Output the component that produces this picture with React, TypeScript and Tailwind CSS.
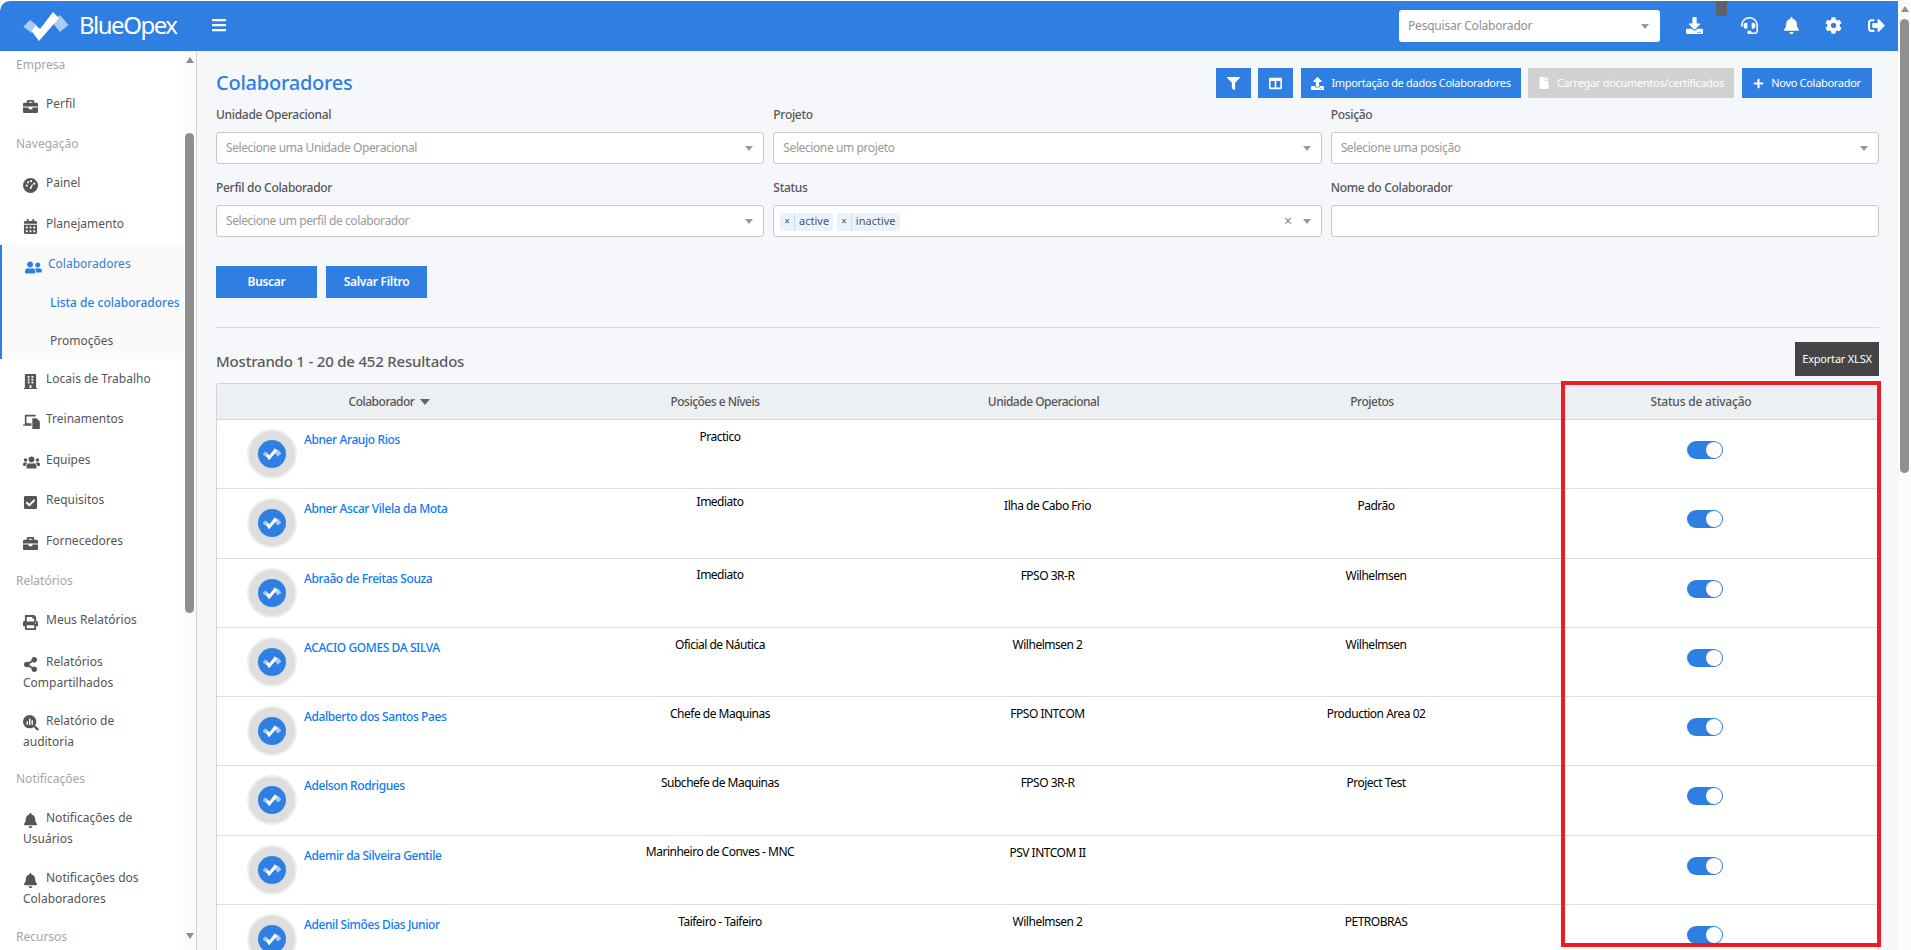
import {
  FaBars,
  FaBell,
  FaBriefcase,
  FaBuilding,
  FaCalendarAlt,
  FaCheckSquare,
  FaCog,
  FaColumns,
  FaDownload,
  FaFile,
  FaFilter,
  FaHeadset,
  FaPlus,
  FaPrint,
  FaShareAlt,
  FaSignOutAlt,
  FaUpload,
  FaUserFriends,
  FaUsers,
} from "react-icons/fa";
import type { ReactNode } from "react";

const blue = "bg-[#2f7fe3]";

const AuditIcon = () => (
  <svg viewBox="0 0 18 18" className="inline-block w-[16px] h-[16px] text-[#555]" fill="currentColor">
    <circle cx="7.5" cy="7.5" r="7.5" />
    <path d="M12 13.5l1.8-1.8 4.2 4.2-1.8 1.8z" />
    <rect x="4" y="7" width="1.6" height="4" fill="#fff" />
    <rect x="6.8" y="4" width="1.6" height="7" fill="#fff" />
    <rect x="9.6" y="6" width="1.6" height="5" fill="#fff" />
  </svg>
);

const TrainingIcon = () => (
  <svg viewBox="0 0 20 18" className="inline-block w-[17px] h-[15px] text-[#555]" fill="currentColor">
    <path d="M2 1h13v2H4v8h6v3H0v-1.5h2z" />
    <path d="M11 5h5l4 4v9h-9z" />
  </svg>
);

const DialIcon = () => (
  <svg viewBox="0 0 16 16" className="inline-block w-[15px] h-[15px] text-[#555]" fill="currentColor">
    <circle cx="8" cy="8" r="8" />
    <circle cx="4" cy="8" r="1.2" fill="#fff" />
    <circle cx="5.4" cy="4.6" r="1.2" fill="#fff" />
    <circle cx="8.6" cy="3.4" r="1.2" fill="#fff" />
    <circle cx="12" cy="6" r="1.2" fill="#fff" />
    <path d="M7 11l2.6-4.4 1 .5L8.6 12z" fill="#fff" />
  </svg>
);

type NavItem = {
  label: string;
  icon?: ReactNode;
  h: string;
  kind: "section" | "item" | "active" | "sub" | "subActive";
  cls?: string;
};

const iconCls = "inline-block text-[15px] text-[#555]";

const nav: NavItem[] = [
  { label: "Empresa", h: "h-[26px]", kind: "section" },
  { label: "Perfil", h: "h-[52px]", kind: "item", cls: "pt-[2px]", icon: <FaBriefcase className={iconCls} /> },
  { label: "Navegação", h: "h-[28px]", kind: "section" },
  { label: "Painel", h: "h-[48px]", kind: "item", cls: "pt-[4px]", icon: <DialIcon /> },
  { label: "Planejamento", h: "h-[40px]", kind: "item", cls: "pb-[2px]", icon: <FaCalendarAlt className={iconCls} /> },
  { label: "Colaboradores", h: "h-[36px]", kind: "active", cls: "pt-[4px]", icon: <FaUserFriends className="inline-block text-[17px] text-[#2f7fe3]" /> },
  { label: "Lista de colaboradores", h: "h-[41px]", kind: "subActive", cls: "pt-[2px]" },
  { label: "Promoções", h: "h-[37px]", kind: "sub" },
  { label: "Locais de Trabalho", h: "h-[39px]", kind: "item", cls: "pt-[2px]", icon: <FaBuilding className={iconCls} /> },
  { label: "Treinamentos", h: "h-[40px]", kind: "item", cls: "pt-[2px]", icon: <TrainingIcon /> },
  { label: "Equipes", h: "h-[41px]", kind: "item", cls: "pt-[4px]", icon: <FaUsers className="inline-block text-[17px] text-[#555]" /> },
  { label: "Requisitos", h: "h-[41px]", kind: "item", cls: "pt-[2px]", icon: <FaCheckSquare className={iconCls} /> },
  { label: "Fornecedores", h: "h-[40px]", kind: "item", cls: "pt-[2px]", icon: <FaBriefcase className={iconCls} /> },
  { label: "Relatórios", h: "h-[40px]", kind: "section" },
  { label: "Meus Relatórios", h: "h-[40px]", kind: "item", icon: <FaPrint className={iconCls} /> },
  { label: "Relatórios Compartilhados", h: "h-[60px]", kind: "item", cls: "pt-[3px]", icon: <FaShareAlt className={iconCls} /> },
  { label: "Relatório de auditoria", h: "h-[59px]", kind: "item", cls: "pt-[2px] pr-[40px]", icon: <AuditIcon /> },
  { label: "Notificações", h: "h-[38px]", kind: "section" },
  { label: "Notificações de Usuários", h: "h-[60px]", kind: "item", cls: "pt-[1px]", icon: <FaBell className={iconCls} /> },
  { label: "Notificações dos Colaboradores", h: "h-[61px]", kind: "item", cls: "pt-[1px]", icon: <FaBell className={iconCls} /> },
  { label: "Recursos", h: "h-[36px]", kind: "section" },
];

const rows = [
  { name: "Abner Araujo Rios", pos: "Practico", unit: "", proj: "", posCls: "pt-[8px]" },
  { name: "Abner Ascar Vilela da Mota", pos: "Imediato", unit: "Ilha de Cabo Frio", proj: "Padrão", posCls: "pt-[4px]" },
  { name: "Abraão de Freitas Souza", pos: "Imediato", unit: "FPSO 3R-R", proj: "Wilhelmsen", posCls: "pt-[7px]" },
  { name: "ACACIO GOMES DA SILVA", pos: "Oficial de Náutica", unit: "Wilhelmsen 2", proj: "Wilhelmsen", posCls: "pt-[8px]" },
  { name: "Adalberto dos Santos Paes", pos: "Chefe de Maquinas", unit: "FPSO INTCOM", proj: "Production Area 02", posCls: "pt-[8px]" },
  { name: "Adelson Rodrigues", pos: "Subchefe de Maquinas", unit: "FPSO 3R-R", proj: "Project Test", posCls: "pt-[8px]" },
  { name: "Ademir da Silveira Gentile", pos: "Marinheiro de Conves - MNC", unit: "PSV INTCOM II", proj: "", posCls: "pt-[7px]" },
  { name: "Adenil Simões Dias Junior", pos: "Taifeiro - Taifeiro", unit: "Wilhelmsen 2", proj: "PETROBRAS", posCls: "pt-[8px]" },
];

const Caret = ({ className = "border-t-[#999999]" }: { className?: string }) => (
  <span className={`inline-block w-0 h-0 border-x-[4px] border-x-transparent border-t-[5px] ${className}`} />
);

const LogoMark = ({ className }: { className: string }) => (
  <svg viewBox="0 0 48 32" className={className}>
    <path d="M1.3 16.7L8 10l6.7 5-5 8z" fill="#a9cbf5" />
    <path d="M38 5l8.5 10-8.5 7-8-10z" fill="#a9cbf5" />
    <path d="M9.5 21l4.5-5.5 4 3.5L31 2l6 6-20 23z" fill="#fff" />
  </svg>
);

const SidebarNav = () => (
  <div className="w-[197px] shrink-0 flex bg-white border-r border-[#d4d4d4] overflow-hidden rounded-bl-[10px]">
    <div className="w-[183px] shrink-0 overflow-hidden text-[12px] leading-[19px] text-[#555]">
      {nav.map((n) => {
        if (n.kind === "section")
          return (
            <div key={n.label} className={`${n.h} flex items-center pl-4 text-[12px] text-[#a5a5a5]`}>
              {n.label}
            </div>
          );
        if (n.kind === "sub" || n.kind === "subActive")
          return (
            <div
              key={n.label}
              className={`${n.h} ${n.cls ?? ""} flex items-center pl-[48px] bg-[#fafafa] border-l-2 border-[#2f7fe3] ${
                n.kind === "subActive" ? "text-[#2f7fe3] font-medium" : ""
              }`}
            >
              <span className="whitespace-nowrap">{n.label}</span>
            </div>
          );
        return (
          <div
            key={n.label}
            className={`${n.h} ${n.cls ?? ""} flex items-center pl-[23px] ${
              n.kind === "active" ? "bg-[#fafafa] border-l-2 border-[#2f7fe3] pl-[21px] text-[#2f7fe3]" : ""
            }`}
          >
            <div>
              <span className="inline-block w-[23px] align-[-2px]">{n.icon}</span>
              {n.label}
            </div>
          </div>
        );
      })}
    </div>
    <div className="relative flex-1 bg-[#fbfbfb] flex flex-col items-center">
      <Caret className="!border-t-0 border-b-[6px] border-b-[#8f8f8f] mt-[6px]" />
      <div className="w-[9px] h-[480px] mt-[70px] rounded-full bg-[#8f8f8f]" />
      <div className="absolute bottom-[5px] left-[3px]">
        <Caret className="border-t-[#8f8f8f] !border-t-[6px]" />
      </div>
    </div>
  </div>
);

const Field = ({ label, placeholder, children }: { label: string; placeholder?: string; children?: ReactNode }) => (
  <div>
    <div className="h-[18px] leading-[18px] text-[12px] font-medium tracking-[-0.3px] text-[#555] mb-[8px]">{label}</div>
    <div className="h-[32px] bg-white border border-[#c9c9c9] rounded-[3px] flex items-center pl-[9px] pr-[10px] text-[12px] tracking-[-0.4px] text-[#999]">
      <div className="flex-1 flex items-center min-w-0 -mt-px">{placeholder ?? children}</div>
      {label !== "Nome do Colaborador" && <Caret />}
    </div>
  </div>
);

const Chip = ({ label }: { label: string }) => (
  <span className="flex items-center h-[18px] bg-[#e9f3fd] rounded-[2px] text-[11px] text-[#555] mr-[4px]">
    <span className="px-[4px] text-[10px] border-r border-[#c5dffa] h-full flex items-center">×</span>
    <span className="px-[4px]">{label}</span>
  </span>
);

const Toggle = () => (
  <div className={`w-[36px] h-[18px] rounded-full ${blue} flex items-center justify-end pr-[1px]`}>
    <div className="w-[16px] h-[16px] rounded-full bg-white" />
  </div>
);

const Avatar = () => (
  <div className="w-[50px] h-[50px] shrink-0 rounded-full bg-[#dedede] border-2 border-[#eeeeee] flex items-center justify-center">
    <div className={`w-[28px] h-[28px] rounded-full ${blue} flex items-center justify-center`}>
      <LogoMark className="w-[20px] h-[14px]" />
    </div>
  </div>
);

const cols = "grid grid-cols-[337px_322px_335px_330px_1fr]";

const ActionButton = ({ w, icon, children, muted }: { w: string; icon: ReactNode; children?: ReactNode; muted?: boolean }) => (
  <button
    className={`${w} h-[30px] flex items-center justify-center gap-[7px] text-white text-[11px] tracking-[-0.3px] ${
      muted ? "bg-[#d1d1d1]" : blue
    }`}
  >
    {icon}
    {children}
  </button>
);

export default function App() {
  return (
    <div className="relative h-screen overflow-hidden flex bg-white font-['Noto_Sans',sans-serif] rounded-t-[10px]">
      <div className="flex-1 min-w-0 flex flex-col pt-px">
        <header className={`h-[50px] shrink-0 ${blue} flex items-center text-white rounded-tl-[10px]`}>
          <div className="w-[211px] flex items-center pl-[22px] gap-[9px]">
            <LogoMark className="w-[48px] h-[32px]" />
            <span className="text-[24px] leading-none tracking-[-1.5px] -mt-[2px]">BlueOpex</span>
          </div>
          <FaBars className="text-[16px] -mt-[3px]" />
          <div className="flex-1" />
          <div className="w-[261px] h-[32px] bg-white rounded-[3px] flex items-center pl-[9px] pr-[11px] text-[12px] tracking-[-0.2px] text-[#8f8f8f]">
            <span className="flex-1">Pesquisar Colaborador</span>
            <Caret />
          </div>
          <div className="w-[238px] pl-[26px] flex items-center text-[17px] -mt-[2px]">
            <FaDownload />
            <FaHeadset className="ml-[38px]" />
            <FaBell className="ml-[25px]" />
            <FaCog className="ml-[25px]" />
            <FaSignOutAlt className="ml-[26px]" />
          </div>
        </header>
        <div className="flex-1 min-h-0 flex">
          <SidebarNav />
          <main className="flex-1 min-w-0 bg-[#f5f7fb] pl-[19px] pr-[19px]">
            <div className="flex items-center justify-between h-[48px] pt-[16px]">
              <h1 className="text-[20px] tracking-[-0.25px] font-medium text-[#2f7fe3] -mt-[1px]">Colaboradores</h1>
              <div className="flex gap-[7px] pr-[7px]">
                <ActionButton w="w-[35px]" icon={<FaFilter className="text-[13px]" />} />
                <ActionButton w="w-[35px] mr-[1px]" icon={<FaColumns className="text-[13px]" />} />
                <ActionButton w="w-[220px]" icon={<FaUpload className="text-[13px]" />}>
                  Importação de dados Colaboradores
                </ActionButton>
                <ActionButton w="w-[206px] mr-[1px]" muted icon={<FaFile className="text-[12px]" />}>
                  Carregar documentos/certificados
                </ActionButton>
                <ActionButton w="w-[130px]" icon={<FaPlus className="text-[11px]" />}>
                  Novo Colaborador
                </ActionButton>
              </div>
            </div>
            <div className="grid grid-cols-3 gap-x-[9px] gap-y-[15px] mt-[7px]">
              <Field label="Unidade Operacional" placeholder="Selecione uma Unidade Operacional" />
              <Field label="Projeto" placeholder="Selecione um projeto" />
              <Field label="Posição" placeholder="Selecione uma posição" />
              <Field label="Perfil do Colaborador" placeholder="Selecione um perfil de colaborador" />
              <Field label="Status">
                <div className="flex -ml-[3px] mt-[2px] tracking-normal">
                  <Chip label="active" />
                  <Chip label="inactive" />
                </div>
                <span className="ml-auto mr-[11px] text-[14px] text-[#888]">×</span>
              </Field>
              <Field label="Nome do Colaborador" placeholder="" />
            </div>
            <div className="flex gap-[9px] mt-[29px]">
              <button className={`w-[101px] h-[32px] ${blue} text-white text-[12px] tracking-[-0.3px] font-semibold`}>Buscar</button>
              <button className={`w-[101px] h-[32px] ${blue} text-white text-[12px] tracking-[-0.3px] font-semibold`}>Salvar Filtro</button>
            </div>
            <div className="h-px bg-[#d9d9d9] mt-[29px]" />
            <div className="flex items-center justify-between mt-[14px] mb-[7px]">
              <div className="text-[15px] tracking-[-0.2px] font-medium text-[#5b5b5b] pt-[4px]">Mostrando 1 - 20 de 452 Resultados</div>
              <button className="w-[84px] h-[34px] bg-[#454547] text-white text-[11px] tracking-[-0.2px]">Exportar XLSX</button>
            </div>
            <div className="border-x border-t border-[#d4d4d4] rounded-t-[3px] bg-white text-[12px] tracking-[-0.5px]">
              <div className={`${cols} h-[36px] items-center text-center bg-[#edf0f2] text-[#555] font-medium border-b border-[#d4d4d4]`}>
                <div className="flex items-center justify-center gap-[6px] pl-[8px]">
                  Colaborador
                  <Caret className="!border-t-[#666] !border-x-[5px] !border-t-[6px]" />
                </div>
                <div>Posições e Níveis</div>
                <div>Unidade Operacional</div>
                <div className="pr-[8px]">Projetos</div>
                <div className="pr-[17px] tracking-[-0.2px]">Status de ativação</div>
              </div>
              {rows.map((r) => (
                <div key={r.name} className={`${cols} h-[69.3px] border-b border-[#dedede] text-center text-black`}>
                  <div className="flex pl-[30px] pt-[9px] text-left">
                    <Avatar />
                    <a className="ml-[7px] mt-[2px] text-[#0d7bf2] font-medium leading-[18px] tracking-[-0.4px]">{r.name}</a>
                  </div>
                  <div className={`${r.posCls} pl-[10px] leading-[18px]`}>{r.pos}</div>
                  <div className="pt-[8px] pl-[8px] leading-[18px]">{r.unit}</div>
                  <div className="pt-[8px] leading-[18px]">{r.proj}</div>
                  <div className="flex justify-center pt-[21px] pr-[10px]">
                    <Toggle />
                  </div>
                </div>
              ))}
            </div>
          </main>
        </div>
      </div>
      <div className="w-[13px] shrink-0 bg-[#fbfbfb] flex flex-col items-center pt-[6px]">
        <Caret className="!border-t-0 border-b-[6px] border-b-[#8f8f8f]" />
        <div className="w-[9px] h-[454px] mt-[7px] rounded-full bg-[#8f8f8f]" />
      </div>
      <div className="absolute left-[1716px] top-[1px] w-[11px] h-[15px] rounded-b-[2px] bg-[#5f6368]" />
      <div className="absolute left-[1561px] top-[381px] w-[320px] h-[566px] border-4 border-[#ed1c24]" />
    </div>
  );
}
